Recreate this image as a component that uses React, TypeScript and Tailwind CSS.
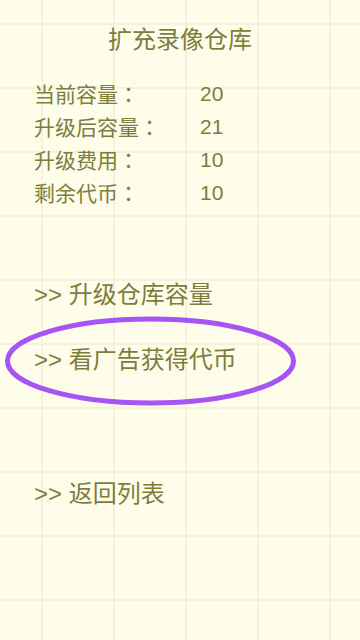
export default function App() {
  const rows = [
    ['当前容量', '20'],
    ['升级后容量', '21'],
    ['升级费用', '10'],
    ['剩余代币', '10'],
  ]

  return (
    <div
      className="relative w-[360px] h-[640px] overflow-hidden bg-[#fdfde9] text-[#7e7d3e] bg-[linear-gradient(to_right,#f4f2dd_2px,transparent_2px),linear-gradient(to_bottom,#f4f2dd_2px,transparent_2px)] bg-[size:72px_64px] bg-[position:41px_23px]"
      style={{ fontFamily: '"Liberation Sans", "Noto Sans CJK SC", sans-serif' }}
    >
      {/* Title */}
      <div className="pt-[22px] text-center text-[24px] leading-[36px]">扩充录像仓库</div>

      {/* Stats */}
      <div className="mt-[19px] pl-[34px] text-[21px] leading-[33px]">
        {rows.map(([label, value]) => (
          <div key={label} className="flex h-[33px] items-center">
            <span className="w-[166px]">
              {label}
              <span style={{ fontFamily: '"Noto Sans CJK TC", sans-serif' }}>：</span>
            </span>
            <span>{value}</span>
          </div>
        ))}
      </div>

      {/* Actions */}
      <div className="mt-[68px] pl-[34px] text-[24px] leading-[36px]">
        <div className="h-[36px]">&gt;&gt; 升级仓库容量</div>
        <div className="relative mt-[29px] h-[36px]">
          &gt;&gt; 看广告获得代币
          <svg
            className="absolute left-[-34px] top-[-41px] pointer-events-none"
            width="300"
            height="120"
            viewBox="0 0 300 120"
          >
            <ellipse cx="150.5" cy="60" rx="143" ry="42" fill="none" stroke="#a853f3" strokeWidth="5" />
          </svg>
        </div>
        <div className="mt-[98px] h-[36px]">&gt;&gt; 返回列表</div>
      </div>
    </div>
  )
}
